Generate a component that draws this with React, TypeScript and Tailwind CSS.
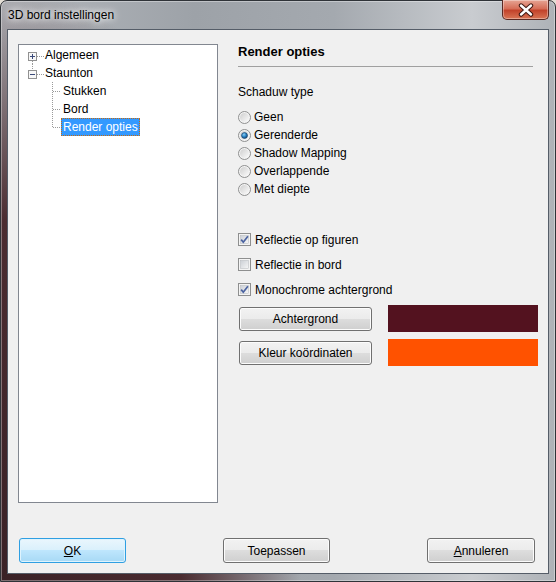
import React, { useId } from 'react';
import clsx from 'clsx';

const radios = ['Geen', 'Gerenderde', 'Shadow Mapping', 'Overlappende', 'Met diepte'];
const checks = [
  { label: 'Reflectie op figuren', checked: true },
  { label: 'Reflectie in bord', checked: false },
  { label: 'Monochrome achtergrond', checked: true },
];

function Radio({ checked }: { checked?: boolean }) {
  const id = useId();
  return (
    <svg width="13" height="13" viewBox="0 0 13 13" className="shrink-0">
      <defs>
        <linearGradient id={id + 'r'} x1="0" y1="0" x2="1" y2="1">
          <stop offset="0" stopColor="#cfcfcf" />
          <stop offset="1" stopColor="#fbfbfb" />
        </linearGradient>
        <radialGradient id={id + 'd'} cx="0.4" cy="0.35" r="0.7">
          <stop offset="0" stopColor="#8fd0f4" />
          <stop offset="0.5" stopColor="#2a84c6" />
          <stop offset="1" stopColor="#0d3e6e" />
        </radialGradient>
      </defs>
      <circle cx="6.5" cy="6.5" r="6" fill="#f4f4f4" stroke="#8e8f8f" />
      <circle cx="6.5" cy="6.5" r="4.5" fill={`url(#${id}r)`} />
      {checked && <circle cx="6.5" cy="6.5" r="3" fill={`url(#${id}d)`} stroke="#1b3f66" strokeWidth="0.6" />}
    </svg>
  );
}

function Check({ checked }: { checked?: boolean }) {
  const id = useId();
  return (
    <svg width="13" height="13" viewBox="0 0 13 13" className="shrink-0">
      <defs>
        <linearGradient id={id} x1="0" y1="0" x2="1" y2="1">
          <stop offset="0" stopColor="#cbcfd5" />
          <stop offset="1" stopColor="#f7f7f7" />
        </linearGradient>
      </defs>
      <rect x="0.5" y="0.5" width="12" height="12" fill="#f4f4f4" stroke="#8e8f8f" />
      <rect x="2.5" y="2.5" width="8" height="8" fill={`url(#${id})`} stroke="#b4b7bc" strokeWidth="0.5" />
      {checked && <path d="M3.2 6.6 L5.3 9.2 L9.9 3.2" fill="none" stroke="#4a62a0" strokeWidth="1.7" />}
    </svg>
  );
}

function WinButton({ children, primary, className }: { children: React.ReactNode; primary?: boolean; className?: string }) {
  return (
    <div
      className={clsx(
        'flex shrink-0 items-center justify-center rounded-[3px] border leading-[16px]',
        primary
          ? 'border-[#2f9fe2] bg-[linear-gradient(to_bottom,#eaf6fd_0%,#d9f0fc_50%,#bee6fd_50%,#a7d9f5_100%)] shadow-[inset_0_0_0_1px_#dff3fd]'
          : 'border-[#707070] bg-[linear-gradient(to_bottom,#f2f2f2_0%,#ebebeb_50%,#dddddd_50%,#cfcfcf_100%)] shadow-[inset_0_0_0_1px_#fcfcfc]',
        className
      )}
    >
      {children}
    </div>
  );
}

const dots = { stroke: '#9a9a9a', strokeDasharray: '1 1', strokeWidth: 1 };

function Expander({ open, above, below }: { open: boolean; above?: boolean; below?: boolean }) {
  return (
    <svg width="25" height="18" viewBox="0 0 25 18" className="shrink-0">
      {above && <line x1="13.5" y1="0" x2="13.5" y2="6" {...dots} />}
      {below && <line x1="13.5" y1="15" x2="13.5" y2="18" {...dots} />}
      <line x1="18" y1="10.5" x2="25" y2="10.5" {...dots} />
      <rect x="9.5" y="6.5" width="8" height="8" fill="#f7f7f7" stroke="#919191" />
      <line x1="11" y1="10.5" x2="16" y2="10.5" stroke="#3a4a7a" />
      {!open && <line x1="13.5" y1="8" x2="13.5" y2="13" stroke="#3a4a7a" />}
    </svg>
  );
}

function Branch({ last }: { last?: boolean }) {
  return (
    <svg width="42" height="18" viewBox="0 0 42 18" className="shrink-0">
      <line x1="33.5" y1="0" x2="33.5" y2={last ? 9 : 18} {...dots} />
      <line x1="34" y1="9.5" x2="42" y2="9.5" {...dots} />
    </svg>
  );
}

export default function App() {
  return (
    <div className="w-[556px] h-[582px] bg-[#e4dfd6] font-['Liberation_Sans',Arial,sans-serif] text-[12px] text-black">
      <div className="flex flex-col w-[556px] h-[582px] rounded-t-[7px] border border-[#2f3338] px-[6px] pb-[7px] shadow-[inset_0_0_0_1px_rgba(255,255,255,0.35)] bg-[radial-gradient(ellipse_300px_600px_at_0%_100%,#3a2126_0%,#4b2c31_60%,rgba(75,44,49,0)_100%),linear-gradient(to_right,#b4b8bd_0%,#9da2a8_35%,#a4a9af_60%,#c9ccd0_85%,#aeb2b7_100%)]">
        {/* Title bar */}
        <div className="flex h-[28px] shrink-0">
          <div className="pl-[1px] self-center text-[12px] leading-[16px] [text-shadow:0_0_6px_#fff,0_0_10px_#fff]">3D bord instellingen</div>
          <div className="ml-auto -mt-[1px] w-[47px] h-[20px] rounded-b-[5px] border border-t-0 border-[#5a2a24] flex items-center justify-center bg-[linear-gradient(to_bottom,#e6a594_0%,#d66e58_45%,#c2432b_55%,#d97555_100%)] shadow-[inset_0_0_0_1px_rgba(255,255,255,0.35)]">
            <svg width="16" height="14" viewBox="0 0 16 14">
              <path d="M3 2.5 L13 11.5 M13 2.5 L3 11.5" stroke="#3e1812" strokeWidth="4.4" strokeLinecap="round" />
              <path d="M3 2.5 L13 11.5 M13 2.5 L3 11.5" stroke="#ffffff" strokeWidth="2.4" strokeLinecap="round" />
            </svg>
          </div>
        </div>

        {/* Client area */}
        <div className="flex-1 flex flex-col border border-[#555d68] bg-[#f0f0f0]">
          <div className="flex mt-[14px] ml-[10px]">
            {/* Tree */}
            <div className="w-[200px] h-[459px] shrink-0 border border-[#828790] bg-white pt-[1px] leading-[16px]">
              <div className="flex items-center h-[18px]">
                <Expander open={false} below />
                <span className="px-[1px]">Algemeen</span>
              </div>
              <div className="flex items-center h-[18px]">
                <Expander open above />
                <span className="px-[1px]">Staunton</span>
              </div>
              <div className="flex items-center h-[18px]">
                <Branch />
                <span className="px-[2px]">Stukken</span>
              </div>
              <div className="flex items-center h-[18px]">
                <Branch />
                <span className="px-[2px]">Bord</span>
              </div>
              <div className="flex items-center h-[18px]">
                <Branch last />
                <span className="h-[18px] px-[1px] border border-dotted border-[#c56a10] bg-[#3399ff] text-white">Render opties</span>
              </div>
            </div>

            {/* Options */}
            <div className="ml-[20px] w-[300px] shrink-0">
              <div className="font-bold text-[13px] leading-[16px]">Render opties</div>
              <div className="mt-[6px] mr-[5px] h-px bg-[#a0a0a0]" />
              <div className="mt-[17px] leading-[16px]">Schaduw type</div>
              <div className="mt-[8px]">
                {radios.map((r, i) => (
                  <div key={r} className="flex items-center gap-[3px] h-[18px]">
                    <Radio checked={i === 1} />
                    <span>{r}</span>
                  </div>
                ))}
              </div>
              <div className="mt-[29px]">
                {checks.map(c => (
                  <div key={c.label} className="flex items-center gap-[4px] h-[25px]">
                    <Check checked={c.checked} />
                    <span>{c.label}</span>
                  </div>
                ))}
              </div>
              <div className="mt-[3px] flex items-center gap-[16px] h-[27px]">
                <WinButton className="ml-[1px] w-[133px] h-[24px]">Achtergrond</WinButton>
                <div className="w-[150px] h-[27px] shrink-0 bg-[#53121f]" />
              </div>
              <div className="mt-[7px] flex items-center gap-[16px] h-[27px]">
                <WinButton className="ml-[1px] w-[133px] h-[24px]">Kleur koördinaten</WinButton>
                <div className="w-[150px] h-[27px] shrink-0 bg-[#ff5200]" />
              </div>
            </div>
          </div>

          {/* Bottom buttons */}
          <div className="flex mt-[35px] ml-[11px] gap-[97px]">
            <WinButton primary className="w-[107px] h-[25px]">
              <span><span className="underline">O</span>K</span>
            </WinButton>
            <WinButton className="w-[107px] h-[25px]">Toepassen</WinButton>
            <WinButton className="w-[108px] h-[25px]">
              <span><span className="underline">A</span>nnuleren</span>
            </WinButton>
          </div>
        </div>
      </div>
    </div>
  );
}
